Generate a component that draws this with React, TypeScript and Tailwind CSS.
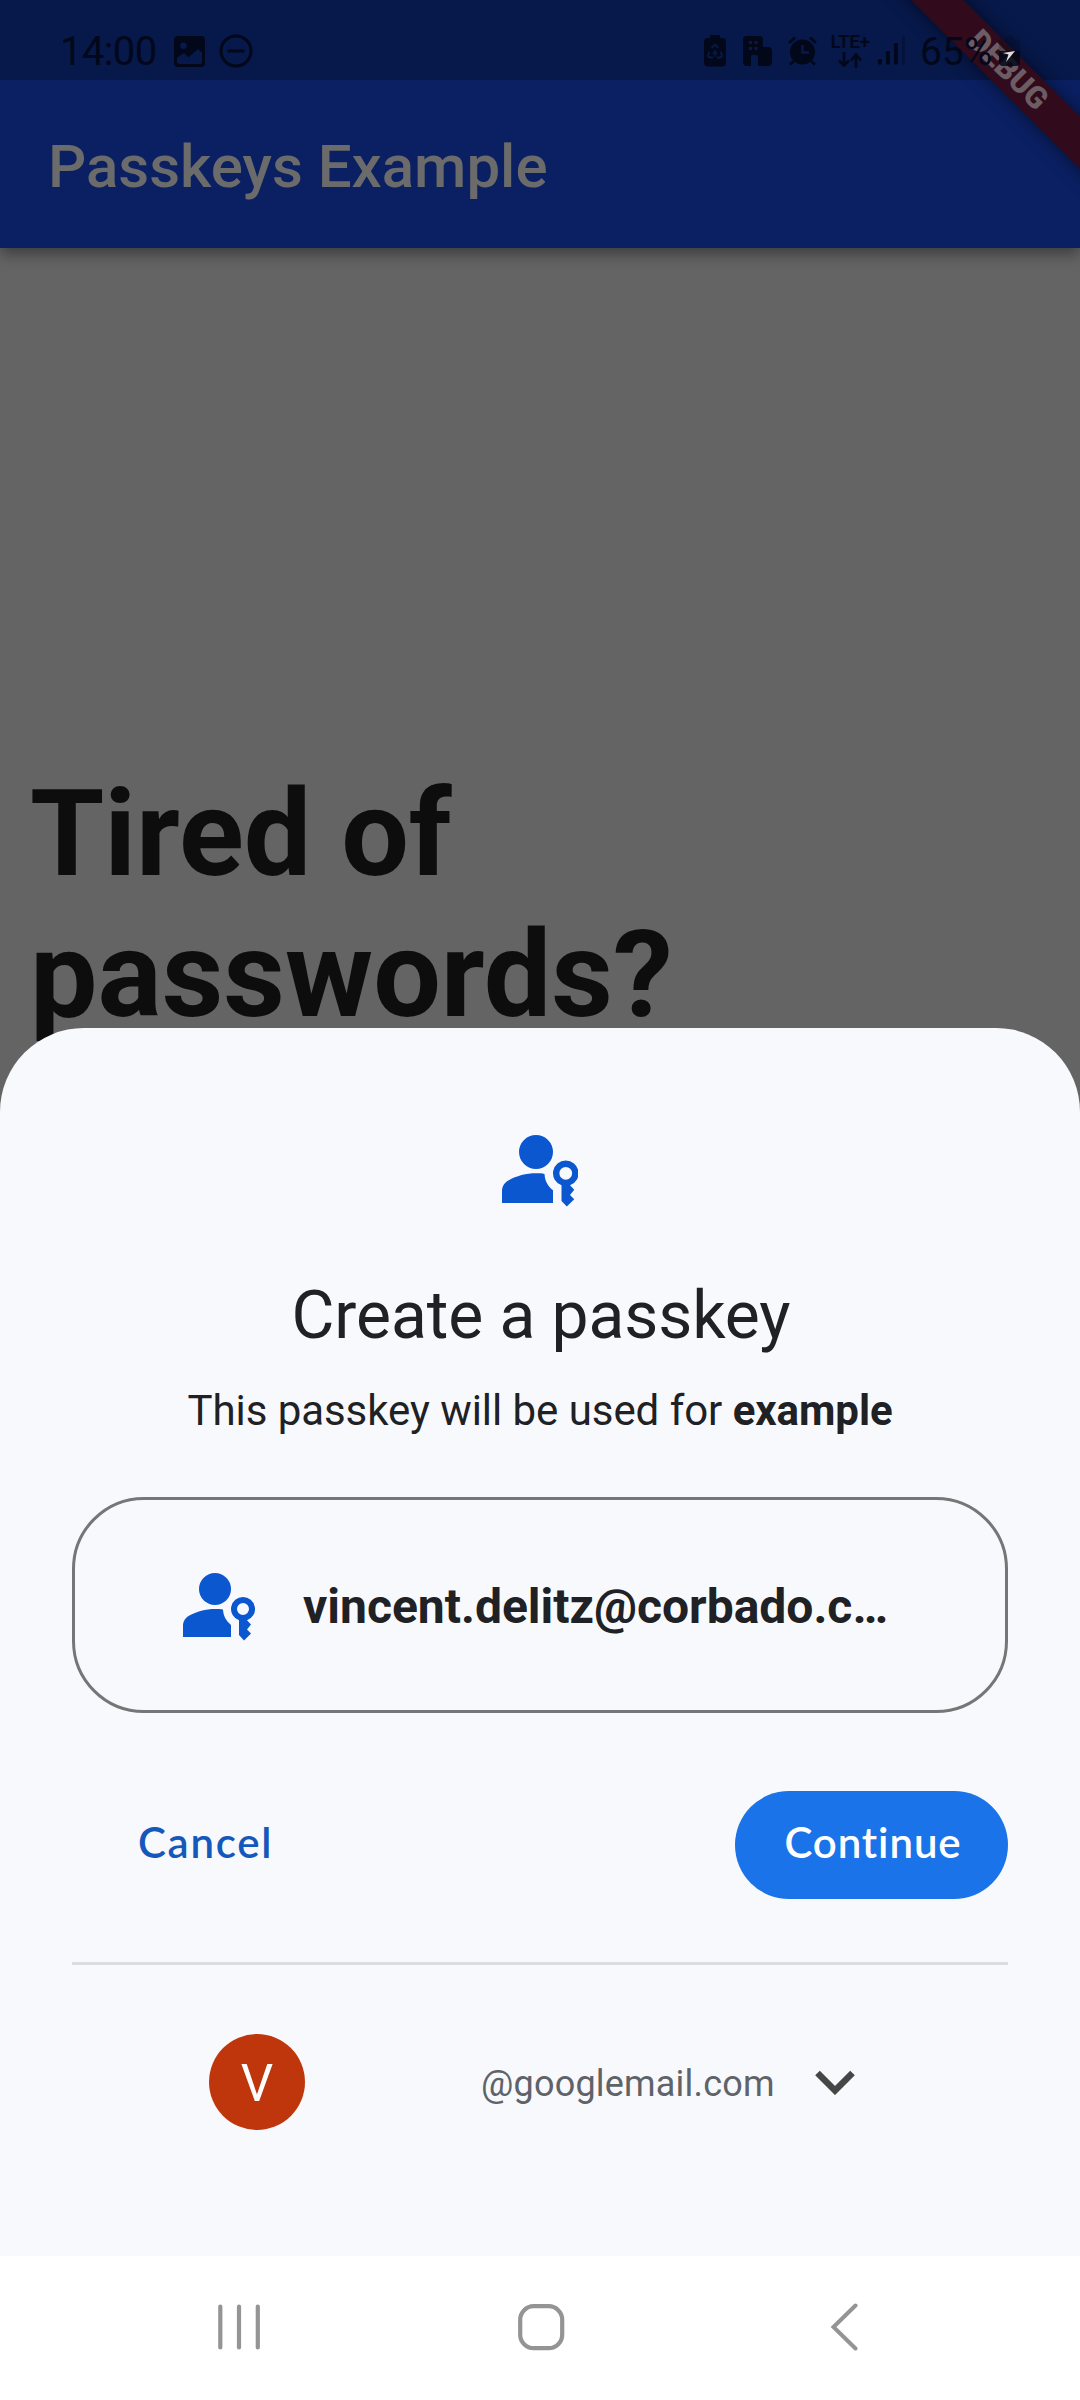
import type { ReactNode } from "react";

function PasskeyIcon({ className }: { className: string }) {
  return (
    <svg viewBox="0 0 18 17" className={className} fill="#0b57d0">
      <circle cx="8" cy="4" r="4" />
      <path d="M0 16V13.2C0 12.1.6 11.2 1.5 10.7 3.4 9.6 5.700 9 8 9c.7 0 1.400 0 2 .15C10.100 10.800 10.800 12 12 13v3Z" />
      <path
        fillRule="evenodd"
        d="M15 6a3 3 0 0 1 1 5.830L17 12.900l-1 1.200 1 1-1.750 1.750L14 15.500v-3.670A3 3 0 0 1 15 6Zm0 1.500a1.500 1.500 0 1 0 0 3 1.500 1.500 0 0 0 0-3Z"
      />
    </svg>
  );
}

function StatusIcon({ w, h, className, children }: { w: number; h: number; className: string; children: ReactNode }) {
  return (
    <svg width={w} height={h} viewBox={`0 0 ${w} ${h}`} className={`shrink-0 ${className}`} fill="#020819">
      {children}
    </svg>
  );
}

function StatusBar() {
  return (
    <div className="relative z-20 flex h-[80px] items-start pl-[60px] text-[#020819]">
      <span className="mt-[29px] w-[114px] text-[40px] leading-[46px] tracking-[-0.6px]">14:00</span>
      <StatusIcon w={31} h={31} className="mt-[36px]">
        <path
          fillRule="evenodd"
          d="M4 0h23a4 4 0 0 1 4 4v23a4 4 0 0 1-4 4H4a4 4 0 0 1-4-4V4a4 4 0 0 1 4-4ZM3 21.500V26a2 2 0 0 0 2 2h21a2 2 0 0 0 2-2v-9.500l-4-3.500-9.500 8.200L10 17.200ZM9.500 6.500a3.300 3.300 0 1 0 0 6.600 3.300 3.300 0 0 0 0-6.600Z"
        />
      </StatusIcon>
      <StatusIcon w={34} h={34} className="ml-[14px] mt-[34px]">
        <circle cx="17" cy="17" r="15" fill="none" stroke="#020819" strokeWidth="3" />
        <path d="M8.500 15.500h17v3h-17z" />
      </StatusIcon>
      <StatusIcon w={22} h={32} className="ml-[451px] mt-[35px]">
        <path d="M7 0h8q1 0 1 1v2h2q4 0 4 4v20q0 4.500-4 4.500H4q-4 0-4-4.500V7q0-4 4-4h2V1q0-1 1-1Z" />
        <g fill="none" stroke="#07184a" strokeWidth="1.800">
          <path d="m7.500 13 3.500-3.500 3.500 3.500M5.500 16.500 4 20.500q0 2 3 2h2M16.500 16.500l1.500 4q0 2-3 2h-2" />
          <path d="m11 14.500 3 4.500H8Z M10.200 18h1.600v4h-1.600Z" fill="#07184a" strokeWidth=".3" />
        </g>
      </StatusIcon>
      <StatusIcon w={29} h={30} className="ml-[17px] mt-[36px]">
        <path
          fillRule="evenodd"
          d="M4 0h12q4 0 4 4v7h5q4 0 4 4v11q0 4-4 4H15V21q0-2-2-2h-3q-2 0-2 2v9H4q-4 0-4-4V4q0-4 4-4Zm2 5v3h3V5Zm5.500 0v3h3v-3Z M6 11v3h3v-3Zm5.500 0v3h3v-3Z"
        />
      </StatusIcon>
      <StatusIcon w={30} h={30} className="ml-[16px] mt-[36px]">
        <circle cx="14.500" cy="16" r="12.500" />
        <path d="m1 7 6-5.500M28 7l-6-5.500M6 25l-4 3.500M23 25l4 3.500" stroke="#020819" strokeWidth="2.600" />
        <path d="M14.500 9v7.500H21" fill="none" stroke="#07184a" strokeWidth="2.600" />
      </StatusIcon>
      <div className="ml-[12px] mt-[32px] flex w-[40px] flex-col items-center">
        <span className="text-[19px] font-semibold leading-[19px] tracking-[-0.5px]">LTE+</span>
        <StatusIcon w={24} h={16} className="mt-[1px]">
          <path d="M6 0v13M1 8.500 6 13.500l5-5M18 15.500V3m-5 5.500L18 2.500 23 8.500" fill="none" stroke="#020819" strokeWidth="2.600" />
        </StatusIcon>
      </div>
      <StatusIcon w={28} h={30} className="ml-[8px] mt-[35px]">
        <rect y="24" width="3.800" height="5.500" rx="1" />
        <rect x="8" y="16" width="3.800" height="13.500" rx="1" />
        <rect x="16" y="8" width="3.800" height="21.500" rx="1" />
        <rect x="24" y="1" width="3" height="28.500" rx="1" opacity=".3" />
      </StatusIcon>
      <span className="ml-[14px] mt-[29px] w-[79px] text-[39px] leading-[46px]">65%</span>
      <StatusIcon w={22} h={32} className="mt-[35px]">
        <path d="M7 1h8v3h3q3 0 3 3v10H0V7q0-3 3-3h4Z" opacity=".25" />
        <path d="M0 16h21v11q0 4-4 4H4q-4 0-4-4Z" opacity=".85" />
        <path d="m4 18 12-2-9 11 2.500-7.500Z" fill="#dedede" />
      </StatusIcon>
    </div>
  );
}

function DebugRibbon() {
  return (
    <div className="absolute right-0 top-0 z-10 h-[260px] w-[260px] overflow-hidden">
      <div className="absolute left-[28px] top-[52px] flex h-[36.500px] w-[320px] rotate-45 items-center justify-center bg-[#310b1b] text-[30.600px] font-black leading-none text-[#6c5d64] shadow-[0_0_18px_rgba(0,0,0,0.5)]">
        DEBUG
      </div>
    </div>
  );
}

function Sheet() {
  return (
    <section className="absolute inset-x-0 top-[1028px] flex h-[1228px] flex-col items-center rounded-t-[84px] bg-[#f8f9fd] px-[72px] pt-[107px] text-[#202124]">
      <PasskeyIcon className="h-[72.250px] w-[76.500px]" />
      <h2 className="mt-[70px] whitespace-nowrap pl-[2px] text-[66px] leading-[78px] tracking-[-0.1px]">Create a passkey</h2>
      <p className="mt-[31px] whitespace-nowrap text-[42px] leading-[50px] tracking-[-0.05px]">
        This passkey will be used for <b className="font-bold">example</b>
      </p>
      <div className="mt-[61px] flex h-[216px] w-full items-center rounded-[72px] border-[3px] border-[#747775] pl-[108px]">
        <PasskeyIcon className="mt-[4px] h-[68px] w-[72px]" />
        <span className="ml-[48px] mt-[3px] whitespace-nowrap text-[48px] font-bold leading-[56px]">vincent.delitz@corbado.c…</span>
      </div>
      <div className="mt-[78px] flex w-full items-center justify-between pl-[66px] font-['Lato',sans-serif] text-[42px] font-semibold">
        <button className="pb-[5px] tracking-[1.7px] text-[#1558bb]">Cancel</button>
        <button className="h-[108px] w-[273px] rounded-full bg-[#1a73e8] pb-[5px] pl-[3px] tracking-[0.9px] text-white">Continue</button>
      </div>
      <hr className="mt-[63px] h-[3px] w-full shrink-0 border-0 bg-[#dadce0]" />
      <div className="mt-[69px] flex h-[96px] w-full items-center pl-[137px]">
        <div className="flex h-[96px] w-[96px] items-center justify-center rounded-full bg-[#bf360c] pt-[3px] text-[51px] leading-none text-white">V</div>
        <span className="ml-[176px] mt-[4px] w-[334px] text-[36px] leading-[42px] tracking-[0.2px] text-[#5f6368]">@googlemail.com</span>
        <svg width="40" height="25" viewBox="0 0 40 25" className="mt-[1px]">
          <path d="m2.500 3 17.500 17.500L37.500 3" fill="none" stroke="#444746" strokeWidth="6.500" />
        </svg>
      </div>
    </section>
  );
}

function NavBar() {
  return (
    <nav className="absolute inset-x-0 bottom-0 flex h-[144px] items-center bg-white pl-[217px]">
      <svg width="44" height="48" viewBox="0 0 44 48" stroke="#949494" strokeWidth="4.200" strokeLinecap="round">
        <path d="M3.300 2.500v41M22 2.500v41M40.800 2.500v41" />
      </svg>
      <svg width="48" height="48" viewBox="0 0 48 48" className="ml-[256px]" fill="none" stroke="#949494" strokeWidth="4.200">
        <rect x="3.200" y="2.200" width="42" height="42" rx="13.500" />
      </svg>
      <svg width="30" height="50" viewBox="0 0 30 50" className="ml-[265px]" fill="none" stroke="#949494" strokeWidth="4" strokeLinecap="round">
        <path d="M25.500 2.500 3.500 24 25.500 45.500" />
      </svg>
    </nav>
  );
}

export default function App() {
  return (
    <div className="relative h-[2400px] w-[1080px] overflow-hidden bg-[#646464] font-['Roboto',sans-serif]">
      <header className="relative h-[248px] bg-[linear-gradient(#07184a_80px,#0a2063_80px)] shadow-[0_6px_14px_rgba(0,0,0,0.4)]">
        <StatusBar />
        <h1 className="flex h-[168px] items-center pl-[48px] pt-[5px] text-[60px] font-medium text-[#6b6b6b]">Passkeys Example</h1>
        <DebugRibbon />
      </header>
      <main className="px-[30px] pt-[516px] text-[120px] font-bold leading-[141px] text-[#0d0d0d]">
        Tired of
        <br />
        passwords?
      </main>
      <Sheet />
      <NavBar />
    </div>
  );
}
